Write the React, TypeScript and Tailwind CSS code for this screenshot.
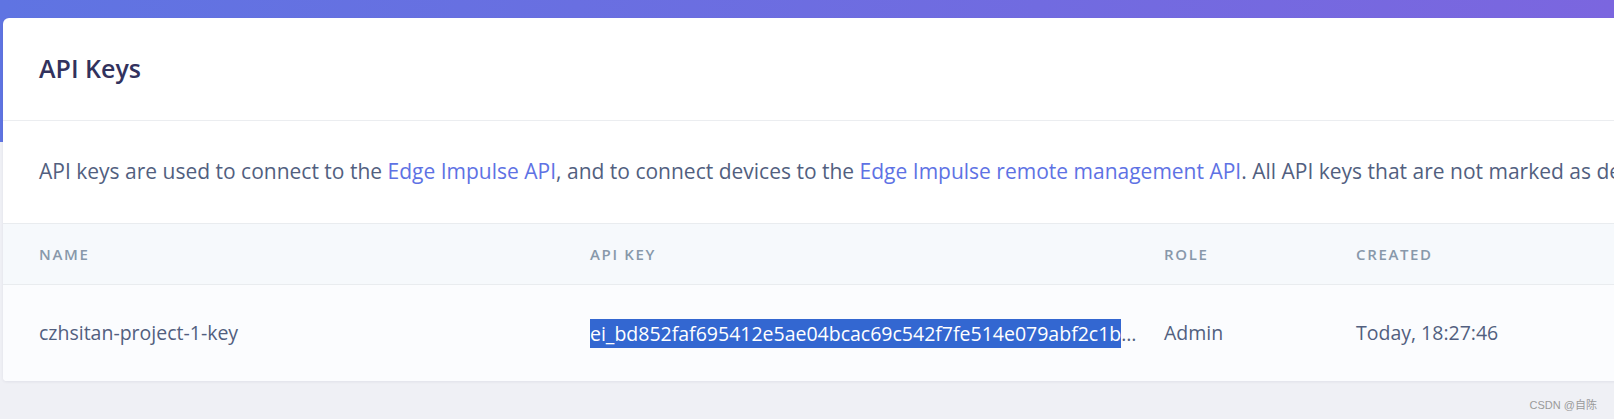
export default function App() {
  return (
    <div
      className="relative h-[419px] w-full overflow-hidden bg-[#eff0f5] bg-[linear-gradient(to_bottom,transparent_142px,#eff0f5_142px),linear-gradient(to_right,#5f74e2,#7b66df)]"
      style={{ fontFamily: '"Open Sans", "Noto Sans", sans-serif' }}
    >
      {/* Card */}
      <div className="ml-[3px] mt-[18px] w-[1660px] rounded-tl-[6px] rounded-bl-[4px] bg-white shadow-[0_1px_3px_rgba(50,50,93,0.08)]">
        {/* Header */}
        <div className="flex h-[103px] items-center border-b border-[#ebedf0] pl-[36px]">
          <h1 className="text-[25px] font-semibold text-[#32325d]">API Keys</h1>
        </div>

        {/* Description */}
        <div className="flex h-[102px] items-center overflow-hidden whitespace-nowrap pl-[36px] text-[21px] text-[#525f7f]">
          <p>
            API keys are used to connect to the{" "}
            <a className="text-[#5e72e4]">Edge Impulse API</a>, and to connect devices to the{" "}
            <a className="text-[#5e72e4]">Edge Impulse remote management API</a>. All API keys that are not marked as
            development keys are secret.
          </p>
        </div>

        {/* Table header */}
        <div className="grid h-[62px] grid-cols-[551px_574px_192px_1fr] items-center border-y border-[#e9ecef] bg-[#f6f9fc] pl-[36px] text-[15px] font-semibold uppercase tracking-[0.11em] text-[#8898aa]">
          <div>Name</div>
          <div>API Key</div>
          <div>Role</div>
          <div>Created</div>
        </div>

        {/* Row */}
        <div className="grid h-[96px] grid-cols-[551px_574px_192px_1fr] items-center rounded-bl-[4px] bg-[#fbfcfe] pl-[36px] text-[19.5px] text-[#525f7f]">
          <div>czhsitan-project-1-key</div>
          <div className="whitespace-nowrap leading-[29px]">
            <span className="bg-[#3367d1] py-[1px] text-white">ei_bd852faf695412e5ae04bcac69c542f7fe514e079abf2c1b</span>
            <span>…</span>
          </div>
          <div>Admin</div>
          <div>Today, 18:27:46</div>
        </div>
      </div>

      {/* Watermark */}
      <div
        className="absolute bottom-[6px] right-[17px] text-[11px] text-[#9a9a9a]"
        style={{ fontFamily: '"Liberation Sans", "Noto Sans CJK SC", sans-serif' }}
      >
        CSDN @自陈
      </div>
    </div>
  )
}
